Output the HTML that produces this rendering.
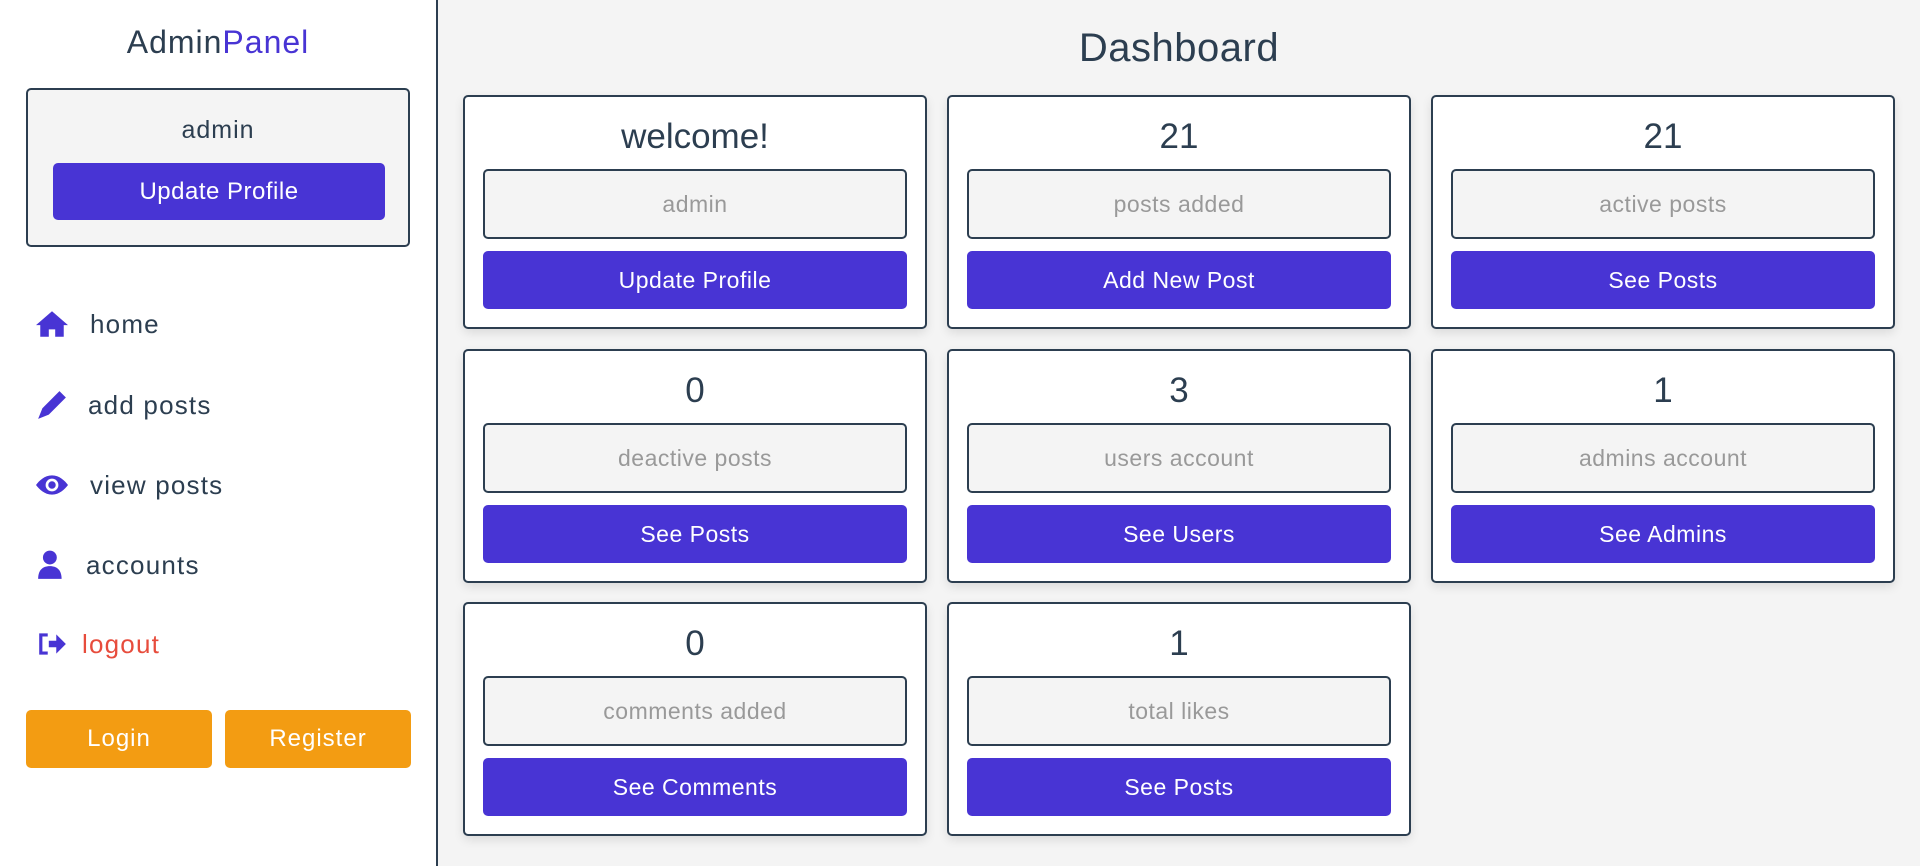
<!DOCTYPE html>
<html><head><meta charset="utf-8"><style>
*{box-sizing:border-box;margin:0;padding:0}
body{width:1920px;height:866px;overflow:hidden;font-family:"Liberation Sans",sans-serif;background:#f4f4f4;color:#2c3e50;position:relative}
.side{position:absolute;left:0;top:0;width:438px;height:866px;background:#fff;border-right:2px solid #2c3e50}
.logo{position:absolute;top:24px;left:0;width:436px;text-align:center;font-size:32px;letter-spacing:1px}
.logo span{color:#4834d4}
.prof{position:absolute;left:26px;top:88px;width:384px;height:159px;background:#f4f4f4;border:2px solid #2c3e50;border-radius:5px}
.prof .n{position:absolute;top:26px;width:100%;text-align:center;font-size:25px;letter-spacing:1px}
.btn{background:#4834d4;color:#fff;border-radius:5px;display:flex;align-items:center;justify-content:center;font-size:24px;position:absolute;letter-spacing:.5px}
.nav{position:absolute;left:36px;display:flex;align-items:center;font-size:26px;height:40px;letter-spacing:1.2px}
.nav svg{width:32px;height:32px;fill:#4834d4}
.ob{position:absolute;top:710px;height:58px;width:186px;background:#f39c12;color:#fff;border-radius:5px;display:flex;align-items:center;justify-content:center;font-size:24px;letter-spacing:1px}
h1{position:absolute;left:438px;width:1482px;top:26px;text-align:center;font-weight:normal;font-size:40px;letter-spacing:.5px}
.card{position:absolute;width:464px;height:234px;background:#fff;border:2px solid #2c3e50;border-radius:5px;box-shadow:0 4px 10px rgba(0,0,0,.1)}
.card .t{position:absolute;top:20px;width:100%;text-align:center;font-size:35px}
.card .i{position:absolute;left:18px;right:18px;top:72px;height:70px;border:2px solid #2c3e50;border-radius:5px;background:#f4f4f4;color:#999;font-size:23px;display:flex;align-items:center;justify-content:center;letter-spacing:.5px}
.card .btn{left:18px;right:18px;top:154px;height:58px;font-size:23px}
</style></head><body>
<div class="side">
<div class="logo">Admin<span>Panel</span></div>
<div class="prof"><div class="n">admin</div><div class="btn" style="left:25px;top:73px;width:332px;height:57px">Update Profile</div></div>
<div class="nav" style="top:304px"><svg viewBox="0 0 30 30" style="margin-right:22px"><path d="M15 3L0 16h4v11h8v-7h6v7h8V16h4z"/></svg>home</div>
<div class="nav" style="top:385px"><svg viewBox="0 0 30 30" style="margin-right:20px"><path d="M22 2l6 6-16 16-10 4 4-10z"/></svg>add posts</div>
<div class="nav" style="top:465px"><svg viewBox="0 0 30 30" style="margin-right:22px"><path fill-rule="evenodd" d="M15 6C8 6 3 11 0 15c3 4 8 9 15 9s12-5 15-9c-3-4-8-9-15-9zm0 3a6 6 0 110 12 6 6 0 010-12zm0 2.5a3.5 3.5 0 100 7 3.5 3.5 0 000-7z"/></svg>view posts</div>
<div class="nav" style="top:545px"><svg viewBox="0 0 30 30" style="margin-right:18px"><circle cx="13" cy="8" r="6.5"/><path d="M2 28c0-8 4-12 11-12s11 4 11 12z"/></svg>accounts</div>
<div class="nav" style="top:624px;color:#e74c3c"><svg viewBox="0 0 30 30" style="margin-right:14px"><path d="M3 5h8v3H6v14h5v3H3zM12 12h7V6l9 9-9 9v-6h-7z"/></svg>logout</div>
<div class="ob" style="left:26px">Login</div>
<div class="ob" style="left:225px">Register</div>
</div>
<h1>Dashboard</h1>

<div class="card" style="left:463px;top:95px"><div class="t">welcome!</div><div class="i">admin</div><div class="btn">Update Profile</div></div>
<div class="card" style="left:947px;top:95px"><div class="t">21</div><div class="i">posts added</div><div class="btn">Add New Post</div></div>
<div class="card" style="left:1431px;top:95px"><div class="t">21</div><div class="i">active posts</div><div class="btn">See Posts</div></div>
<div class="card" style="left:463px;top:349px"><div class="t">0</div><div class="i">deactive posts</div><div class="btn">See Posts</div></div>
<div class="card" style="left:947px;top:349px"><div class="t">3</div><div class="i">users account</div><div class="btn">See Users</div></div>
<div class="card" style="left:1431px;top:349px"><div class="t">1</div><div class="i">admins account</div><div class="btn">See Admins</div></div>
<div class="card" style="left:463px;top:602px"><div class="t">0</div><div class="i">comments added</div><div class="btn">See Comments</div></div>
<div class="card" style="left:947px;top:602px"><div class="t">1</div><div class="i">total likes</div><div class="btn">See Posts</div></div>
</body></html>
